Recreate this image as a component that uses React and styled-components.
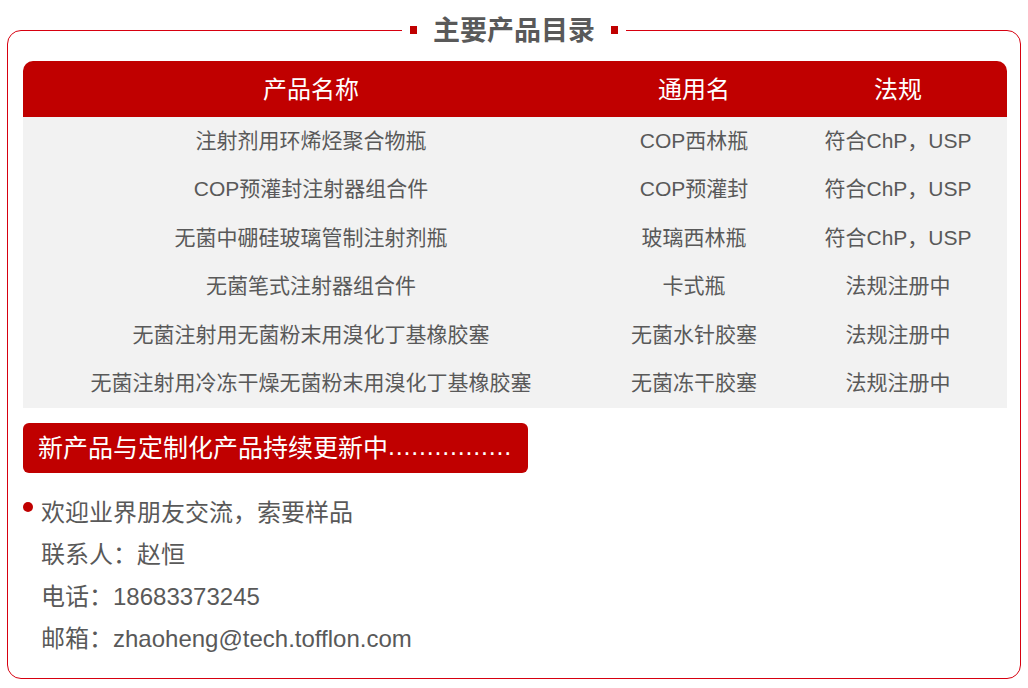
import React from "react";
import styled, { createGlobalStyle } from "styled-components";

const Global = createGlobalStyle`
  html, body { margin: 0; padding: 0; background: #fff; }
  body { font-family: "Liberation Sans", "Noto Sans CJK SC", sans-serif; }
`;

const Page = styled.div`
  width: 1028px;
  height: 688px;
  padding: 30px 7px 9px 7px;
  box-sizing: border-box;
`;

const Frame = styled.section`
  position: relative;
  height: 100%;
  box-sizing: border-box;
  border: 1px solid #d7000f;
  border-radius: 14px;
  padding: 30px 13px 0 15px;
`;

const TitleWrap = styled.div`
  position: absolute;
  top: -19px;
  left: 50%;
  transform: translateX(-50%);
  display: flex;
  align-items: center;
  gap: 16px;
  padding: 0 8px;
  background: #fff;
`;

const Square = styled.span`
  width: 7px;
  height: 8px;
  background: #c00000;
  display: block;
  margin-top: 2px;
`;

const Title = styled.h2`
  margin: 0;
  font-size: 27px;
  line-height: 34px;
  font-weight: 700;
  color: #595959;
  font-family: "Noto Sans CJK SC", sans-serif;
`;

const Table = styled.div`
  display: grid;
  grid-template-columns: 576px 190px 1fr;
  border-radius: 10px 10px 0 0;
  overflow: hidden;
`;

const HeadCell = styled.div`
  background: #c00000;
  color: #fff;
  height: 56px;
  display: flex;
  align-items: center;
  justify-content: center;
  font-size: 24px;
  padding-bottom: 3px;
  box-sizing: border-box;
`;

const Cell = styled.div`
  background: #f2f2f2;
  color: #595959;
  height: 48.5px;
  box-sizing: border-box;
  padding-bottom: 5px;
  display: flex;
  align-items: center;
  justify-content: center;
  font-size: 21px;
  white-space: nowrap;
`;

const Banner = styled.div`
  margin-top: 15px;
  width: 505px;
  height: 50px;
  box-sizing: border-box;
  background: #c00000;
  border-radius: 6px;
  color: #fff;
  font-size: 25px;
  display: flex;
  align-items: center;
  padding: 0 0 4px 15px;
  white-space: nowrap;
`;

const Dots = styled.span`
  letter-spacing: 0.8px;
`;

const Info = styled.ul`
  list-style: none;
  margin: 19px 0 0 0;
  padding: 0 0 0 18px;
`;

const Item = styled.li`
  position: relative;
  font-size: 24px;
  line-height: 42px;
  color: #595959;
  white-space: nowrap;
`;

const Dot = styled.span`
  position: absolute;
  left: -18px;
  top: 10px;
  width: 10px;
  height: 10px;
  border-radius: 50%;
  background: #c00000;
`;

const rows = [
  ["注射剂用环烯烃聚合物瓶", "COP西林瓶", "符合ChP，USP"],
  ["COP预灌封注射器组合件", "COP预灌封", "符合ChP，USP"],
  ["无菌中硼硅玻璃管制注射剂瓶", "玻璃西林瓶", "符合ChP，USP"],
  ["无菌笔式注射器组合件", "卡式瓶", "法规注册中"],
  ["无菌注射用无菌粉末用溴化丁基橡胶塞", "无菌水针胶塞", "法规注册中"],
  ["无菌注射用冷冻干燥无菌粉末用溴化丁基橡胶塞", "无菌冻干胶塞", "法规注册中"],
];

export default function App() {
  return (
    <Page>
      <Global />
      <Frame>
        <TitleWrap>
          <Square />
          <Title>主要产品目录</Title>
          <Square />
        </TitleWrap>
        <Table>
          <HeadCell>产品名称</HeadCell>
          <HeadCell>通用名</HeadCell>
          <HeadCell>法规</HeadCell>
          {rows.map((r, i) =>
            r.map((c, j) => <Cell key={i + "-" + j}>{c}</Cell>)
          )}
        </Table>
        <Banner>
          新产品与定制化产品持续更新中<Dots>................</Dots>
        </Banner>
        <Info>
          <Item>
            <Dot />
            欢迎业界朋友交流，索要样品
          </Item>
          <Item>联系人：赵恒</Item>
          <Item>电话：18683373245</Item>
          <Item>邮箱：zhaoheng@tech.tofflon.com</Item>
        </Info>
      </Frame>
    </Page>
  );
}
